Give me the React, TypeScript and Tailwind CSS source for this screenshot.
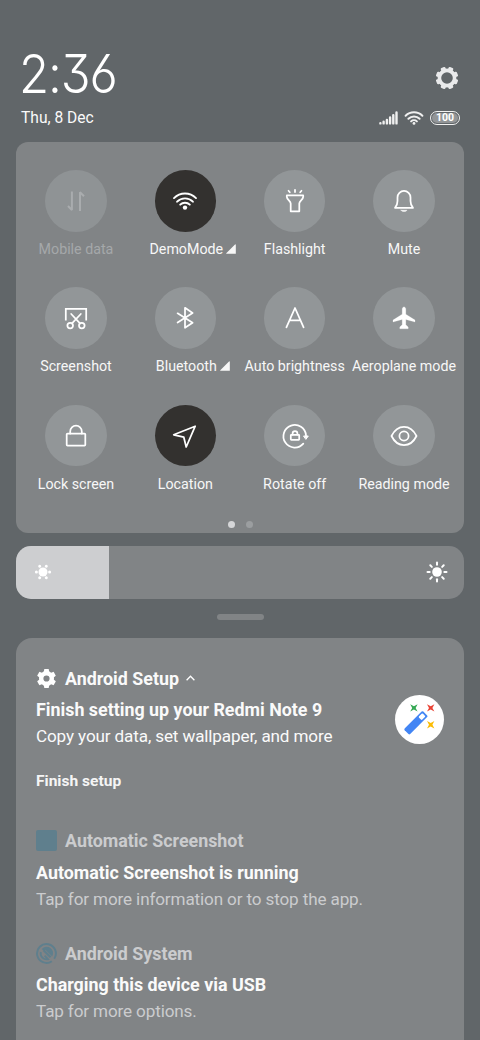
import type { ReactNode } from "react";

const stroke = {
  fill: "none",
  stroke: "currentColor",
  strokeWidth: 1.75,
  strokeLinecap: "round" as const,
  strokeLinejoin: "round" as const,
};

function Icon({ children }: { children: ReactNode }) {
  return (
    <svg width="32" height="32" viewBox="-16 -16 32 32" {...stroke}>
      {children}
    </svg>
  );
}

const MobileData = () => (
  <Icon>
    <path d="M-4.1 -9.5V9L-8 5M4 10V-8.8L8 -4.8" strokeLinecap="butt" strokeLinejoin="bevel" strokeWidth="2" />
  </Icon>
);
const Wifi = () => (
  <Icon>
    <path d="M-11 -2.9A15.6 15.6 0 0 1 11 -2.9M-7.9 0.7A11 11 0 0 1 7.9 0.7M-4.8 3.7A6.8 6.8 0 0 1 4.8 3.7" strokeWidth="1.9" />
    <circle cy="6.6" r="2.2" fill="currentColor" stroke="none" />
  </Icon>
);
const Flashlight = () => (
  <Icon>
    <path d="M-8.2 -5.6H8.2V-4.2C8.2 -1.2 4.3 0 4.3 2.5V10.3H-4.3V2.5C-4.3 0 -8.2 -1.2 -8.2 -4.2ZM0 -11.2V-9M-6.5 -10.2L-5.2 -8.7M6.5 -10.2L5.2 -8.7" />
  </Icon>
);
const Bell = () => (
  <Icon>
    <path d="M-9 6.8C-7 4.6 -6.5 3 -6.5 0V-3.6A6.5 6.5 0 0 1 6.5 -3.6V0C6.5 3 7 4.6 9 6.8Z" />
    <path d="M-3 9.2H3C2.3 11 -2.3 11 -3 9.2Z" fill="currentColor" strokeWidth="0.4" />
  </Icon>
);
const Screenshot = () => (
  <Icon>
    <path d="M-10.2 2.4V-9.2H10.2V2.4" strokeLinejoin="miter" strokeLinecap="butt" />
    <path d="M-4.8 -4L4 5.3M4.8 -4L-4 5.3" />
    <circle cx="-5.8" cy="7.6" r="2.8" />
    <circle cx="5.8" cy="7.6" r="2.8" />
  </Icon>
);
const Bluetooth = () => (
  <Icon>
    <path d="M-7.4 -4.7L7.6 4.8L0 9.8V-10.2L7.6 -5L-7.4 4.5" />
  </Icon>
);
const AutoBrightness = () => (
  <Icon>
    <path d="M-8.6 9.3L0 -10L8.6 9.3M-5.6 2.4H5.6" />
  </Icon>
);
const Plane = () => (
  <Icon>
    <path
      d="M0 -11C1.2 -11 1.8 -10 1.8 -8.7V-3.8L11 2V4L1.8 1.5V6.8L4.2 9V10.8H-4.2V9L-1.8 6.8V1.5L-11 4V2L-1.8 -3.8V-8.7C-1.8 -10 -1.2 -11 0 -11Z"
      fill="currentColor"
      strokeWidth="0.2"
    />
  </Icon>
);
const Lock = () => (
  <Icon>
    <rect x="-9.3" y="-2.5" width="18.6" height="12.1" rx="0.8" />
    <path d="M-5.8 -2.5V-4.6A5.8 5.8 0 0 1 5.8 -4.6V-2.5" />
  </Icon>
);
const Location = () => (
  <Icon>
    <path d="M10.2 -9.8L-11.3 -1.2L-1.2 1.2L1.2 11Z" />
  </Icon>
);
const Rotate = () => (
  <Icon>
    <path d="M8.3 7.6A11.3 11.3 0 1 1 11 -0.5" />
    <path d="M8.9 0H13.3L11.1 3.1Z" fill="currentColor" strokeWidth="1" />
    <rect x="-4.2" y="-1.2" width="8.4" height="5" rx="0.5" />
    <path d="M-2.4 -1.4V-2.4A2.4 2.4 0 0 1 2.4 -2.4V-1.4" />
  </Icon>
);
const Eye = () => (
  <Icon>
    <path d="M-12.5 0C-6.5 -12.2 6.5 -12.2 12.5 0C6.5 12.2 -6.5 12.2 -12.5 0Z" />
    <circle r="4.6" />
  </Icon>
);

type Tile = { label: string; icon: ReactNode; active?: boolean; disabled?: boolean; expandable?: boolean };

const tiles: Tile[] = [
  { label: "Mobile data", icon: <MobileData />, disabled: true },
  { label: "DemoMode", icon: <Wifi />, active: true, expandable: true },
  { label: "Flashlight", icon: <Flashlight /> },
  { label: "Mute", icon: <Bell /> },
  { label: "Screenshot", icon: <Screenshot /> },
  { label: "Bluetooth", icon: <Bluetooth />, expandable: true },
  { label: "Auto brightness", icon: <AutoBrightness /> },
  { label: "Aeroplane mode", icon: <Plane /> },
  { label: "Lock screen", icon: <Lock /> },
  { label: "Location", icon: <Location />, active: true },
  { label: "Rotate off", icon: <Rotate /> },
  { label: "Reading mode", icon: <Eye /> },
];

function QuickTile({ label, icon, active, disabled, expandable }: Tile) {
  return (
    <div className="flex h-[117.4px] flex-col items-center">
      <div
        className={`flex h-[61.5px] w-[61.5px] shrink-0 items-center justify-center rounded-full ${
          active ? "bg-[#33312f] text-white" : disabled ? "bg-[#8f9395] text-[#a9acae]" : "bg-[#929698] text-white"
        }`}
      >
        {icon}
      </div>
      <span
        className={`relative mt-[7.4px] text-[14.25px] leading-5 whitespace-nowrap ${disabled ? "text-[#a5a8aa]" : "text-[#f7f7f7]"} ${
          expandable ? "ml-[2px]" : ""
        }`}
      >
        {label}
        {expandable && (
          <svg className="absolute top-[5px] left-full ml-[3px]" width="10" height="10" viewBox="0 0 10 10" fill="currentColor">
            <path d="M9 0.4Q9.8 0 9.8 1V9.8H0.6Q-0.2 9.8 0.5 9Z" />
          </svg>
        )}
      </span>
    </div>
  );
}

const teeth = [0, 45, 90, 135, 180, 225, 270, 315];

function Header() {
  return (
    <header className="flex h-[142px] justify-between pr-5 pl-[21px]">
      <div className="flex flex-col pt-[44px]">
        <div className="-ml-[2.5px] h-[60px] origin-left scale-x-[0.93] font-[Inter] text-[52.8px] leading-[60px] font-light tracking-[-1.2px] text-white [font-feature-settings:'cv03','cv09','ss01']">
          2:36
        </div>
        <div className="mt-[3px] text-[15.6px] leading-[22px] text-[#fafafa]">Thu, 8 Dec</div>
      </div>
      <div className="flex flex-col items-end pt-[66px]">
        <svg className="mr-[1.5px]" width="24" height="24" viewBox="-12 -12 24 24">
          <g fill="#e9eaeb">
            {teeth.map((a) => (
              <rect key={a} x="-2.5" y="-11.3" width="5" height="5" rx="1.2" transform={`rotate(${a + 22.5})`} />
            ))}
          </g>
          <circle r="7.6" fill="none" stroke="#e9eaeb" strokeWidth="3.6" />
        </svg>
        <div className="mt-[20px] flex items-center gap-[6px]">
          <svg width="20" height="14" viewBox="0 0 20 14" stroke="#f0f0f0" strokeWidth="2.4" strokeLinecap="round">
            <path d="M2.4 12.2V12.4M5.6 10.7V12.4M8.9 9V12.4M12.1 6.4V12.4M15.3 4.1V12.4M18.5 1.5V12.4" />
          </svg>
          <svg width="20" height="14" viewBox="0 0 20 14" fill="none" stroke="#f0f0f0" strokeWidth="2" strokeLinecap="round">
            <path d="M1.6 4.8A12 12 0 0 1 18.4 4.8M4.4 7.8A8 8 0 0 1 15.6 7.8M7.1 10.4A4.2 4.2 0 0 1 12.9 10.4" />
            <circle cx="10" cy="12.4" r="1.4" fill="#f0f0f0" stroke="none" />
          </svg>
          <div className="mt-px flex h-[14px] w-[30px] items-center justify-center rounded-full border-[1.5px] border-[#f0f0f0] p-px">
            <div className="flex h-full w-full items-center justify-center rounded-full bg-[#929597] text-[10.5px] leading-none font-bold text-white">
              100
            </div>
          </div>
        </div>
      </div>
    </header>
  );
}

const DimSun = () => (
  <svg width="18" height="18" viewBox="-9 -9 18 18" fill="#fff">
    <circle r="4.5" />
    {[0, 60, 120, 180, 240, 300].map((a) => (
      <circle key={a} cx="6.6" r="1.5" transform={`rotate(${a})`} />
    ))}
  </svg>
);

const BrightSun = () => (
  <svg width="22" height="22" viewBox="-11 -11 22 22" fill="#fff">
    <circle r="4.8" />
    {teeth.map((a) => (
      <rect key={a} x="-1" y="-10.5" width="2" height="4.2" rx="1" transform={`rotate(${a})`} />
    ))}
  </svg>
);

const SetupGear = () => (
  <svg width="21" height="21" viewBox="-10.5 -10.5 21 21">
    <g fill="#fff">
      {[0, 60, 120, 180, 240, 300].map((a) => (
        <path key={a} d="M-2.2 -9.5H2.2L3 -5H-3Z" transform={`rotate(${a})`} />
      ))}
    </g>
    <circle r="5.3" fill="none" stroke="#fff" strokeWidth="4.4" />
  </svg>
);

const SystemIcon = () => (
  <svg width="21" height="21" viewBox="0 0 21 21" fill="none" stroke="#5f7f8d">
    <path d="M15.8 18.2A9.4 9.4 0 1 1 18.2 15.8" strokeWidth="2" />
    <path d="M5.8 6A6.4 6.4 0 0 1 16.2 13.4L9.4 6.8L7.6 7.8Z" fill="#5f7f8d" stroke="none" />
    <path d="M7.6 7.2L14.6 14.2" strokeWidth="2.2" />
    <path d="M4.8 9A6 6 0 0 0 12 16.2L8.6 12.6" strokeWidth="1.9" />
  </svg>
);

function Spark({ x, y, color }: { x: number; y: number; color: string }) {
  return (
    <path
      transform={`translate(${x} ${y})`}
      d="M-3.7 -3.7L0 -1.7L3.7 -3.7L1.7 0L3.7 3.7L0 1.7L-3.7 3.7L-1.7 0Z"
      fill={color}
    />
  );
}

const Wand = () => (
  <div className="flex h-[49px] w-[49px] items-center justify-center rounded-full bg-white">
    <svg width="49" height="49" viewBox="0 0 49 49">
      <g transform="translate(20.9 27.8) rotate(45)">
        <rect x="-3.9" y="-13.2" width="7.8" height="26.4" rx="1.2" fill="#4285f4" />
        <rect x="-2.3" y="-11.4" width="4.6" height="5.6" rx="1" fill="#fff" />
      </g>
      <Spark x={18.9} y={12.9} color="#34a853" />
      <Spark x={35.7} y={12.9} color="#ea4335" />
      <Spark x={35.7} y={29.7} color="#fbbc04" />
    </svg>
  </div>
);

function Notification({
  icon,
  app,
  title,
  text,
  muted,
  chevron,
}: {
  icon: ReactNode;
  app: string;
  title: string;
  text: string;
  muted?: boolean;
  chevron?: boolean;
}) {
  return (
    <div className="flex flex-col">
      <div className={`flex h-6 items-center ${muted ? "text-[#cbccce]" : "text-[#fafafa]"}`}>
        <div className="flex w-[29px]">{icon}</div>
        <span className="pt-px text-[17.85px] leading-6 font-bold">{app}</span>
        {chevron && (
          <svg className="ml-[7px]" width="9" height="6" viewBox="0 0 9 6" fill="none" stroke="#fff" strokeWidth="1.3">
            <path d="M0.6 5.2L4.5 1.2L8.4 5.2" />
          </svg>
        )}
      </div>
      <div className="mt-[8px] text-[17.85px] leading-6 font-bold text-[#fafafa]">{title}</div>
      <div className={`mt-[2px] text-[17.1px] leading-6 tracking-[-0.13px] ${muted ? "text-[#cbccce]" : "text-[#fafafa]"}`}>
        {text}
      </div>
    </div>
  );
}

export default function App() {
  return (
    <div className="h-[1040px] w-[480px] overflow-hidden bg-[#616669] font-[Roboto,sans-serif]">
      <Header />
      <section className="mx-4 flex h-[391px] flex-col rounded-xl bg-[#818486] px-[5.3px] pt-[28px]">
        <div className="grid grid-cols-4">
          {tiles.map((t) => (
            <QuickTile key={t.label} {...t} />
          ))}
        </div>
        <div className="-mt-[1px] flex justify-center gap-[11px]">
          <span className="h-[7px] w-[7px] rounded-full bg-[#d5d6d8]" />
          <span className="h-[7px] w-[7px] rounded-full bg-[#9b9ea0]" />
        </div>
      </section>

      <div className="mx-4 mt-[13px] flex h-[53px] overflow-hidden rounded-[15px] bg-[#818486]">
        <div className="flex w-[93.3px] items-center bg-[#cdced0] pb-px pl-[17.5px]">
          <DimSun />
        </div>
        <div className="flex flex-1 items-center justify-end pr-[16px] pb-px">
          <BrightSun />
        </div>
      </div>
      <div className="mx-auto mt-[15px] h-[6px] w-[47px] rounded-[3px] bg-[#818486]" />

      <section className="mx-4 mt-[17.5px] flex h-[420px] flex-col rounded-t-[16px] bg-[#818486] px-5 pt-[28.5px]">
        <div className="flex items-start justify-between">
          <Notification
            icon={<SetupGear />}
            app="Android Setup"
            title="Finish setting up your Redmi Note 9"
            text="Copy your data, set wallpaper, and more"
            chevron
          />
          <div className="pt-[28.5px]">
            <Wand />
          </div>
        </div>
        <div className="mt-[23px] text-[15.55px] leading-5 font-bold text-[#f5f5f5]">Finish setup</div>
        <div className="mt-[37.5px]">
          <Notification
            icon={<div className="h-[21px] w-[21px] rounded-[2px] bg-[#5f7f8d]" />}
            app="Automatic Screenshot"
            title="Automatic Screenshot is running"
            text="Tap for more information or to stop the app."
            muted
          />
        </div>
        <div className="mt-[30.5px]">
          <Notification
            icon={<SystemIcon />}
            app="Android System"
            title="Charging this device via USB"
            text="Tap for more options."
            muted
          />
        </div>
      </section>
    </div>
  );
}
